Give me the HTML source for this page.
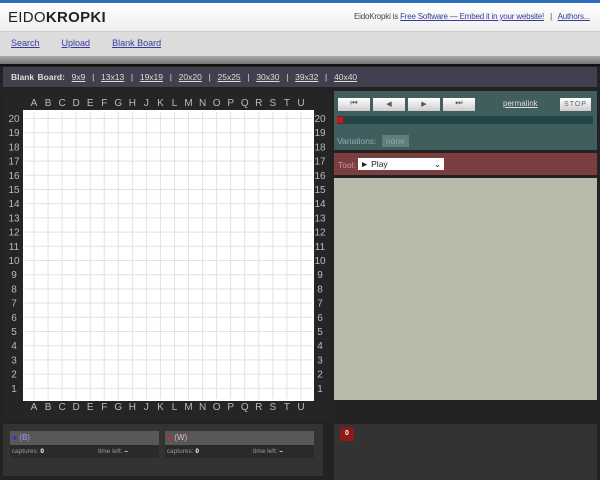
<!DOCTYPE html>
<html><head><style>
body{margin:0;width:600px;height:480px;background:#232323;font-family:"Liberation Sans",sans-serif;position:relative;overflow:hidden}
.a{position:absolute}
a{color:#3a3aa0;text-decoration:underline}
</style></head><body>
<div class="a" style="left:0;top:0;width:600px;height:3px;background:#2f6fb8"></div>
<div class="a" style="left:0;top:3px;width:600px;height:28px;background:linear-gradient(#fff,#eee);border-bottom:1px solid #ccc"></div>
<div class="a" style="left:8px;top:9px;font-size:15px;color:#222;letter-spacing:0.3px">EIDO<b>KROPKI</b></div>
<div class="a" style="left:354px;top:12px;font-size:8px;color:#444;white-space:nowrap;letter-spacing:-0.2px">EidoKropki is <a>Free Software — Embed it in your website!</a> &nbsp; | &nbsp; <a>Authors...</a></div>
<div class="a" style="left:0;top:32px;width:600px;height:24px;background:#dcdcdc"></div>
<div class="a" style="left:11px;top:38px;font-size:9px"><a>Search</a><a style="margin-left:22px">Upload</a><a style="margin-left:22px">Blank Board</a></div>
<div class="a" style="left:0;top:56px;width:600px;height:8px;background:linear-gradient(#aaa,#777)"></div>
<div class="a" style="left:0;top:64px;width:600px;height:2px;background:#111"></div>
<div class="a" style="left:3px;top:67px;width:594px;height:20px;background:#40404f"></div>
<div class="a" style="left:11px;top:72px;font-size:8.5px;color:#ddd;word-spacing:1px"><b>Blank Board:</b> &nbsp;<u>9x9</u> &nbsp;| &nbsp;<u>13x13</u> &nbsp;| &nbsp;<u>19x19</u> &nbsp;| &nbsp;<u>20x20</u> &nbsp;| &nbsp;<u>25x25</u> &nbsp;| &nbsp;<u>30x30</u> &nbsp;| &nbsp;<u>39x32</u> &nbsp;| &nbsp;<u>40x40</u></div>
<div class="a" style="left:3px;top:90px;width:326px;height:330px;background:#252525"></div>
<svg class="a" style="left:0;top:90px" width="330" height="330" font-family="Liberation Sans" font-size="10" fill="#bbb">
<rect x="23" y="20" width="291" height="291" fill="#fff"/>
<g stroke="#e2e2e2" stroke-width="1" id="g"></g>
<g id="t" text-anchor="middle"></g>
</svg>
<script>
var g=document.getElementById('g'),t=document.getElementById('t'),L='ABCDEFGHJKLMNOPQRSTU',h='';
for(var i=0;i<20;i++){var x=34+i*14.05,y=28.5+i*14.2;
h+='<line x1="'+x+'" y1="22" x2="'+x+'" y2="309"/><line x1="25" y1="'+y+'" x2="312" y2="'+y+'"/>';}
g.innerHTML=h;h='';
for(var i=0;i<20;i++){var x=34+i*14.05,y=32+i*14.2;
h+='<text x="'+x+'" y="16">'+L[i]+'</text><text x="'+x+'" y="320">'+L[i]+'</text><text x="14" y="'+y+'">'+(20-i)+'</text><text x="320" y="'+y+'">'+(20-i)+'</text>';}
t.innerHTML=h;
</script>
<div class="a" style="left:334px;top:91px;width:263px;height:59px;background:#3f5e5d"></div>
<div class="a" style="left:338px;top:98px;width:32px;height:13px;background:linear-gradient(#fff,#ccc);font-size:8px;text-align:center;color:#555">⏮</div>
<div class="a" style="left:373px;top:98px;width:32px;height:13px;background:linear-gradient(#fff,#ccc);font-size:7px;text-align:center;color:#555;line-height:13px">◀</div>
<div class="a" style="left:408px;top:98px;width:32px;height:13px;background:linear-gradient(#fff,#ccc);font-size:7px;text-align:center;color:#555;line-height:13px">▶</div>
<div class="a" style="left:443px;top:98px;width:32px;height:13px;background:linear-gradient(#fff,#ccc);font-size:8px;text-align:center;color:#555">⏭</div>
<div class="a" style="left:503px;top:99px;font-size:8px;color:#ddd;text-decoration:underline">permalink</div>
<div class="a" style="left:560px;top:98px;width:31px;height:13px;background:linear-gradient(#fff,#ccc);font-size:7px;text-align:center;line-height:13px;color:#666;letter-spacing:1px">STOP</div>
<div class="a" style="left:337px;top:116px;width:256px;height:8px;background:#234444"></div>
<div class="a" style="left:337px;top:117px;width:6px;height:6px;background:#e01010"></div>
<div class="a" style="left:337px;top:136px;font-size:8.5px;color:#9ab"><span>Variations:</span> <span style="background:#5f7f7f;color:#8aa;padding:1px 4px;margin-left:3px">none</span></div>
<div class="a" style="left:334px;top:153px;width:263px;height:22px;background:#7b3e3e"></div>
<div class="a" style="left:338px;top:160px;font-size:8.5px;color:#c99">Tool:</div>
<div class="a" style="left:358px;top:158px;width:86px;height:12px;background:#fff;font-size:8.5px;line-height:12px;color:#222">&nbsp;► Play<span style="float:right;margin-right:3px">⌄</span></div>
<div class="a" style="left:334px;top:178px;width:263px;height:222px;background:#b8bba9"></div>
<div class="a" style="left:3px;top:424px;width:320px;height:52px;background:#333"></div>
<div class="a" style="left:334px;top:424px;width:263px;height:56px;background:#333"></div>
<div class="a" style="left:10px;top:431px;width:149px;height:14px;background:#585858;font-size:8px;line-height:14px;color:#99f">&nbsp;<span style="color:#33c">●</span> (B)</div>
<div class="a" style="left:10px;top:445px;width:149px;height:13px;background:#2a2a2a;font-size:6.5px;line-height:13px;color:#999">&nbsp;captures: <b style="color:#fff">0</b><span style="position:absolute;left:88px">time left: <b style="color:#fff">–</b></span></div>
<div class="a" style="left:165px;top:431px;width:149px;height:14px;background:#585858;font-size:8px;line-height:14px;color:#ebb">&nbsp;<span style="color:#d22">●</span> (W)</div>
<div class="a" style="left:165px;top:445px;width:149px;height:13px;background:#2a2a2a;font-size:6.5px;line-height:13px;color:#999">&nbsp;captures: <b style="color:#fff">0</b><span style="position:absolute;left:88px">time left: <b style="color:#fff">–</b></span></div>
<div class="a" style="left:340px;top:427px;width:14px;height:14px;background:#8c1a1a;font-size:7px;line-height:14px;text-align:center;color:#fff;font-weight:bold">0</div>
</body></html>
